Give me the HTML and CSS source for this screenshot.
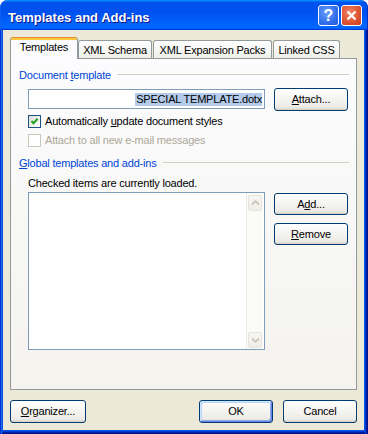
FILE: index.html
```html
<!DOCTYPE html>
<html>
<head>
<meta charset="utf-8">
<link rel="stylesheet" href="styles.css">
</head>
<body>
<div class="window">
  <div class="titlebar">
    <span class="title">Templates and Add-ins</span>
    <div class="tb-btn help">?</div>
    <div class="tb-btn close">
      <svg width="11" height="11" viewBox="0 0 11 11"><path d="M1.5 1.5 L9.5 9.5 M9.5 1.5 L1.5 9.5" stroke="#fff" stroke-width="2.3" fill="none"/></svg>
    </div>
  </div>
  <div class="frame">
    <div class="client">
      <div class="tabs">
        <div class="tab active">Templates</div>
        <div class="tab t-schema">XML Schema</div>
        <div class="tab t-packs">XML Expansion Packs</div>
        <div class="tab t-css">Linked CSS</div>
      </div>
      <div class="panel">
        <div class="ghead"><span>Document <u>t</u>emplate</span><div class="rule"></div></div>
        <div class="row">
          <div class="textbox"><span class="sel">SPECIAL TEMPLATE.dotx</span></div>
          <button class="btn"><u>A</u>ttach...</button>
        </div>
        <div class="check first">
          <span class="cb"><svg width="11" height="11" viewBox="0 0 11 11"><path d="M2.5 5 L4.5 7.2 L8.6 2.8" stroke="#21A121" stroke-width="2" fill="none"/></svg></span>
          <span>Automatically <u>u</u>pdate document styles</span>
        </div>
        <div class="check disabled">
          <span class="cb"></span>
          <span>Attach to all new e-mail messages</span>
        </div>
        <div class="ghead second"><span><u>G</u>lobal templates and add-ins</span><div class="rule"></div></div>
        <div class="note">Checked items are currently loaded.</div>
        <div class="row list-row">
          <div class="listbox">
            <div class="sb">
              <div class="sb-btn"><svg width="9" height="6" viewBox="0 0 9 6"><path d="M1 4.5 L4.5 1.2 L8 4.5" stroke="#C7C5B8" stroke-width="1.8" fill="none"/></svg></div>
              <div class="sb-btn"><svg width="9" height="6" viewBox="0 0 9 6"><path d="M1 1.5 L4.5 4.8 L8 1.5" stroke="#C7C5B8" stroke-width="1.8" fill="none"/></svg></div>
            </div>
          </div>
          <div class="side-btns">
            <button class="btn short">A<u>d</u>d...</button>
            <button class="btn short"><u>R</u>emove</button>
          </div>
        </div>
      </div>
      <div class="footer">
        <button class="btn org"><u>O</u>rganizer...</button>
        <button class="btn default">OK</button>
        <button class="btn">Cancel</button>
      </div>
    </div>
  </div>
</div>
</body>
</html>
```
FILE: styles.css
```css
html, body {
  margin: 0;
  padding: 0;
  background: #ffffff;
}
body {
  font-family: "Liberation Sans", Arial, sans-serif;
  font-size: 11px;
  letter-spacing: -0.2px;
  color: #000;
}
.window {
  width: 368px;
  height: 434px;
  display: flex;
  flex-direction: column;
}
.titlebar {
  height: 30px;
  flex: none;
  box-sizing: border-box;
  display: flex;
  align-items: flex-start;
  padding: 5px 6px 0 8px;
  border-radius: 8px 8px 0 0;
  background: linear-gradient(180deg, #0997ff 0px, #0053ee 2.4px, #0050ee 12px, #0066ff 26px, #0066ff 27.5px, #005bff 28.5px, #003dd7 29px, #003dd7 30px);
  box-shadow: inset 1px 0 #0a5ff0, inset -1px 0 #0031c8;
}
.title {
  flex: 1;
  color: #fff;
  font-weight: bold;
  font-size: 13px;
  line-height: 25px;
  letter-spacing: 0;
  text-shadow: 1px 1px #0f1089;
}
.tb-btn {
  width: 21px;
  height: 21px;
  box-sizing: border-box;
  border: 1px solid #fff;
  border-radius: 3px;
  display: flex;
  align-items: center;
  justify-content: center;
}
.help {
  background: radial-gradient(circle at 40% 35%, #6a9ffb 0%, #3673ef 55%, #2157d8 100%);
  color: #fff;
  font-weight: bold;
  font-size: 16px;
  letter-spacing: 0;
  line-height: 19px;
}
.close {
  margin-left: 2px;
  background: radial-gradient(circle at 40% 35%, #f0876a 0%, #df5633 55%, #c33d1e 100%);
}
.frame {
  flex: 1;
  display: flex;
  padding: 0 4px 4px 3px;
  background: #0855dd;
  box-shadow: inset 1px 0 #0831d9, inset 2px 0 #166aee,
              inset -1px 0 #00138c, inset -2px 0 #001ea0, inset -3px 0 #003bda,
              inset 0 -1px #00138c, inset 0 -2px #001ea0, inset 0 -3px #003bda;
}
.client {
  flex: 1;
  background: #ece9d8;
  padding: 7px 7px 7px 7px;
  display: flex;
  flex-direction: column;
}
.tabs {
  display: flex;
  align-items: flex-end;
  height: 21px;
  flex: none;
}
.tab {
  height: 18px;
  box-sizing: border-box;
  border: 1px solid #919b9c;
  border-bottom: none;
  border-radius: 3px 3px 0 0;
  background: linear-gradient(180deg, #fff, #fafaf9 26%, #f0f0ea 95%, #ecebe5);
  display: flex;
  justify-content: center;
  align-items: center;
  line-height: 13px;
  padding-top: 1px;
}
.tab.active {
  width: 68px;
  height: 22px;
  margin-bottom: -1px;
  position: relative;
  z-index: 1;
  border-top: none;
  padding-top: 0;
  padding-bottom: 2px;
  background: linear-gradient(180deg, #e68b2c 0, #e68b2c 1px, #ffc73c 1px, #ffc73c 3px, #fcfcfe 3px);
}
.t-schema { width: 74px; }
.t-packs { width: 119px; margin-left: 1px; }
.t-css { width: 67px; margin-left: 1px; }
.panel {
  flex: 1;
  border: 1px solid #919b9c;
  background: linear-gradient(180deg, #fcfcfe, #f4f3ee);
  display: flex;
  flex-direction: column;
}
.ghead {
  display: flex;
  align-items: center;
  margin: 10px 7px 0 8px;
  color: #0046d5;
  line-height: 13px;
}
.ghead.second {
  margin-top: 10px;
}
.rule {
  flex: 1;
  height: 1px;
  background: #d0d0bf;
  margin-left: 6px;
  margin-top: -2px;
}
.row {
  display: flex;
  align-items: flex-start;
  gap: 9px;
  margin: 6px 8px 0 17px;
}
.textbox {
  width: 237px;
  height: 20px;
  margin-top: 1px;
  box-sizing: border-box;
  border: 1px solid #7f9db9;
  background: #fff;
  display: flex;
  justify-content: flex-end;
  align-items: center;
  padding-right: 2px;
}
.sel {
  background: #b5cbea;
  line-height: 13px;
  padding-left: 1px;
}
.btn {
  width: 74px;
  height: 23px;
  box-sizing: border-box;
  border: 1px solid #003c74;
  border-radius: 3px;
  background: linear-gradient(180deg, #fff, #ecebe6 86%, #d6d0c5);
  font-family: inherit;
  font-size: 11px;
  letter-spacing: inherit;
  color: #000;
  padding: 0;
  margin: 0;
  line-height: 13px;
}
.btn.short {
  height: 22px;
}
.btn.default {
  box-shadow: inset 1px 1px #cee7ff, inset -1px -1px #6982ee, inset 2px 2px #bcd4f6, inset -2px -2px #89ade4;
}
.check {
  display: flex;
  align-items: center;
  gap: 4px;
  margin: 6px 0 0 17px;
  line-height: 13px;
}
.check.first {
  margin-top: 4px;
}
.cb {
  width: 13px;
  height: 13px;
  box-sizing: border-box;
  border: 1px solid #1c5180;
  background: linear-gradient(135deg, #dcdcd7, #fff);
  display: flex;
  align-items: center;
  justify-content: center;
}
.check.disabled {
  color: #aca899;
}
.check.disabled .cb {
  border-color: #cac8bb;
  background: #fff;
}
.note {
  margin: 7px 0 0 17px;
  line-height: 13px;
}
.list-row {
  margin-top: 2px;
}
.listbox {
  width: 237px;
  height: 158px;
  box-sizing: border-box;
  border: 1px solid #7f9db9;
  background: #fff;
  display: flex;
  justify-content: flex-end;
  padding-right: 1px;
}
.sb {
  width: 17px;
  box-sizing: border-box;
  background: #fbfbf8;
  border-left: 1px solid #eeede5;
  display: flex;
  flex-direction: column;
  justify-content: space-between;
  padding: 2px 1px 1px 1px;
}
.sb-btn {
  height: 16px;
  box-sizing: border-box;
  border: 1px solid #e6e5dd;
  border-radius: 2px;
  background: linear-gradient(180deg, #f7f6f2, #eeede7);
  display: flex;
  align-items: center;
  justify-content: center;
}
.side-btns {
  display: flex;
  flex-direction: column;
  gap: 8px;
  margin-top: 1px;
}
.footer {
  flex: none;
  display: flex;
  gap: 10px;
  margin-top: 10px;
}
.btn.org {
  width: 76px;
  margin-right: auto;
}
```
